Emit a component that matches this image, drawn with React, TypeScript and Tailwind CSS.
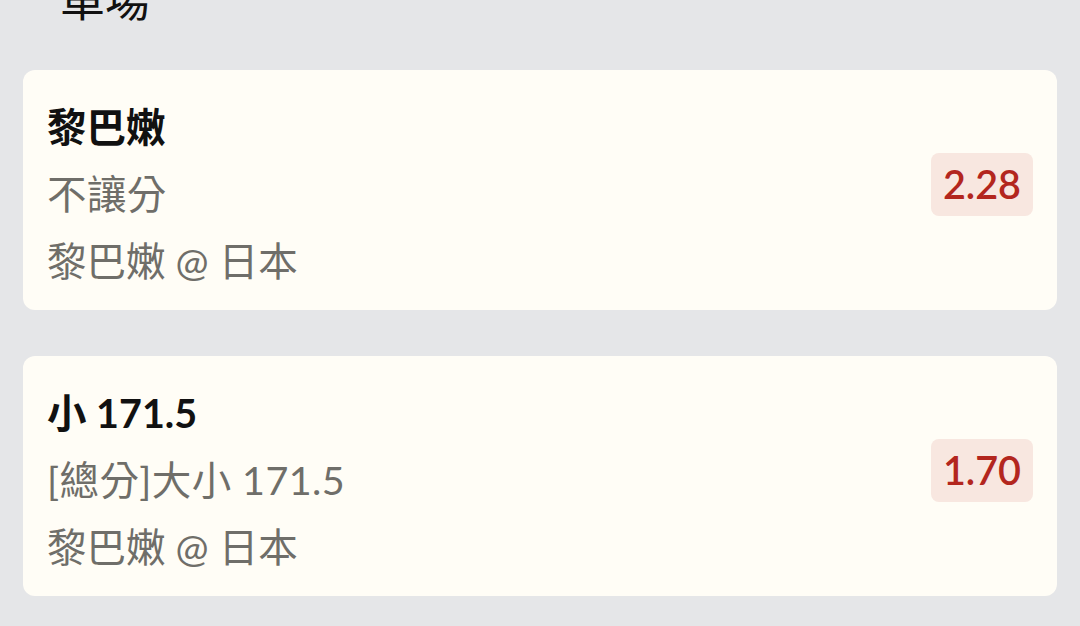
type Bet = {
  title: string
  market: string
  match: string
  odds: string
}

const bets: Bet[] = [
  { title: '黎巴嫩', market: '不讓分', match: '黎巴嫩 @ 日本', odds: '2.28' },
  { title: '小 171.5', market: '[總分]大小 171.5', match: '黎巴嫩 @ 日本', odds: '1.70' },
]

function BetCard({ bet }: { bet: Bet }) {
  return (
    <div className="flex items-center justify-between rounded-[12px] bg-[#fffdf6] pl-[24px] pr-[24px] pt-[23px] pb-[16px]">
      <div className="flex flex-col text-[39.5px] leading-[67px]">
        <div className="font-bold text-[#111111]">{bet.title}</div>
        <div className="tracking-[0.4px] text-[#6f6e69]">{bet.market}</div>
        <div className="text-[#6f6e69]">{bet.match}</div>
      </div>
      <div className="mb-[19px] flex h-[63px] items-center rounded-[8px] bg-[#f8e7e0] px-[12px] text-[39.5px] font-semibold text-[#b3261e]">
        {bet.odds}
      </div>
    </div>
  )
}

export default function App() {
  return (
    <div className="min-h-screen overflow-hidden bg-[#e5e6e8] font-['Lato','Noto_Sans_CJK_TC',sans-serif]">
      <div className="px-[23px]">
        <h2 className="-mt-[22px] pl-[37px] text-[45px] leading-[45px] text-[#111111]">單場</h2>
        <div className="mt-[47px] flex flex-col gap-[46px]">
          {bets.map((bet) => (
            <BetCard key={bet.odds} bet={bet} />
          ))}
        </div>
      </div>
    </div>
  )
}
